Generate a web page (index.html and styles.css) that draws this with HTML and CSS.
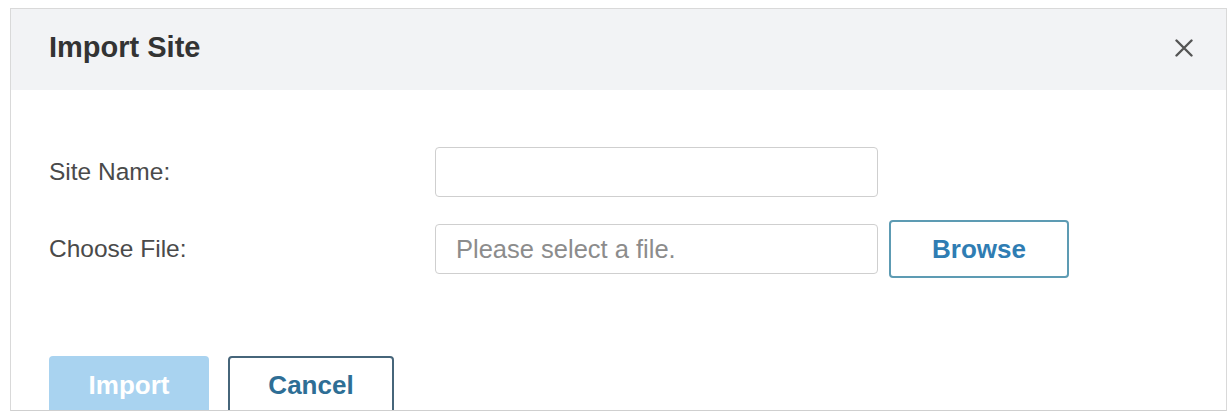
FILE: index.html
```html
<!DOCTYPE html>
<html lang="en">
<head>
<meta charset="utf-8">
<title>Import Site</title>
<link rel="stylesheet" href="styles.css">
</head>
<body>
<div class="dialog">
  <div class="dialog-header">
    <h1 class="dialog-title">Import Site</h1>
    <button class="close-btn" aria-label="Close">
      <svg width="20" height="18" viewBox="0 0 20 18" aria-hidden="true">
        <path d="M2.5 1.5 L17.5 16.5 M17.5 1.5 L2.5 16.5" stroke="#555" stroke-width="2.4" stroke-linecap="round" fill="none"/>
      </svg>
    </button>
  </div>
  <div class="dialog-body">
    <div class="form">
      <label class="form-label" for="site-name">Site Name:</label>
      <div class="form-field">
        <input id="site-name" class="text-input" type="text">
      </div>
      <label class="form-label" for="file">Choose File:</label>
      <div class="form-field">
        <input id="file" class="text-input" type="text" placeholder="Please select a file.">
        <button class="btn btn-outline browse">Browse</button>
      </div>
    </div>
    <div class="dialog-footer">
      <button class="btn btn-primary" disabled>Import</button>
      <button class="btn btn-secondary">Cancel</button>
    </div>
  </div>
</div>
</body>
</html>
```
FILE: styles.css
```css
* { box-sizing: border-box; }

html, body {
  margin: 0;
  padding: 0;
  background: #ffffff;
}

body {
  font-family: "Liberation Sans", Arial, sans-serif;
  color: #444;
}

.dialog {
  margin: 8px 2px 0 10px;
  height: 403px;
  border: 1px solid #d9d9d9;
  border-bottom-color: #cfcfcf;
  overflow: hidden;
  background: #fff;
}

.dialog-header {
  height: 81px;
  background: #f2f3f5;
  display: flex;
  align-items: center;
  justify-content: space-between;
  padding: 0 32px 4px 38px;
}

.dialog-title {
  margin: 0;
  font-size: 29px;
  font-weight: bold;
  color: #333;
}

.close-btn {
  border: 0;
  background: transparent;
  padding: 0;
  width: 20px;
  height: 18px;
  display: flex;
}

.dialog-body {
  padding: 57px 0 0 38px;
}

.form {
  display: grid;
  grid-template-columns: 386px auto;
  row-gap: 23px;
  align-items: center;
}

.form-label {
  font-size: 24.5px;
  color: #4a4a4a;
}

.form-field {
  display: flex;
  align-items: center;
  gap: 11px;
}

.text-input {
  width: 443px;
  height: 50px;
  border: 1.5px solid #cfcfcf;
  border-radius: 4px;
  padding: 0 20px;
  font-family: "Liberation Sans", Arial, sans-serif;
  font-size: 25.5px;
  color: #444;
  background: #fff;
}

.text-input::placeholder {
  color: #8c8c8c;
}

.btn {
  height: 58px;
  border-radius: 4px;
  font-family: "Liberation Sans", Arial, sans-serif;
  font-size: 26px;
  font-weight: bold;
  padding: 0;
}

.browse {
  width: 180px;
  border: 2px solid #5d9bb3;
  background: #fff;
  color: #2f7db3;
}

.dialog-footer {
  display: flex;
  gap: 19px;
  margin-top: 78px;
}

.btn-primary {
  width: 160px;
  border: 0;
  background: #a9d3f0;
  color: #fff;
}

.btn-secondary {
  width: 166px;
  border: 2px solid #46657a;
  background: #fff;
  color: #2e6e95;
}
```
